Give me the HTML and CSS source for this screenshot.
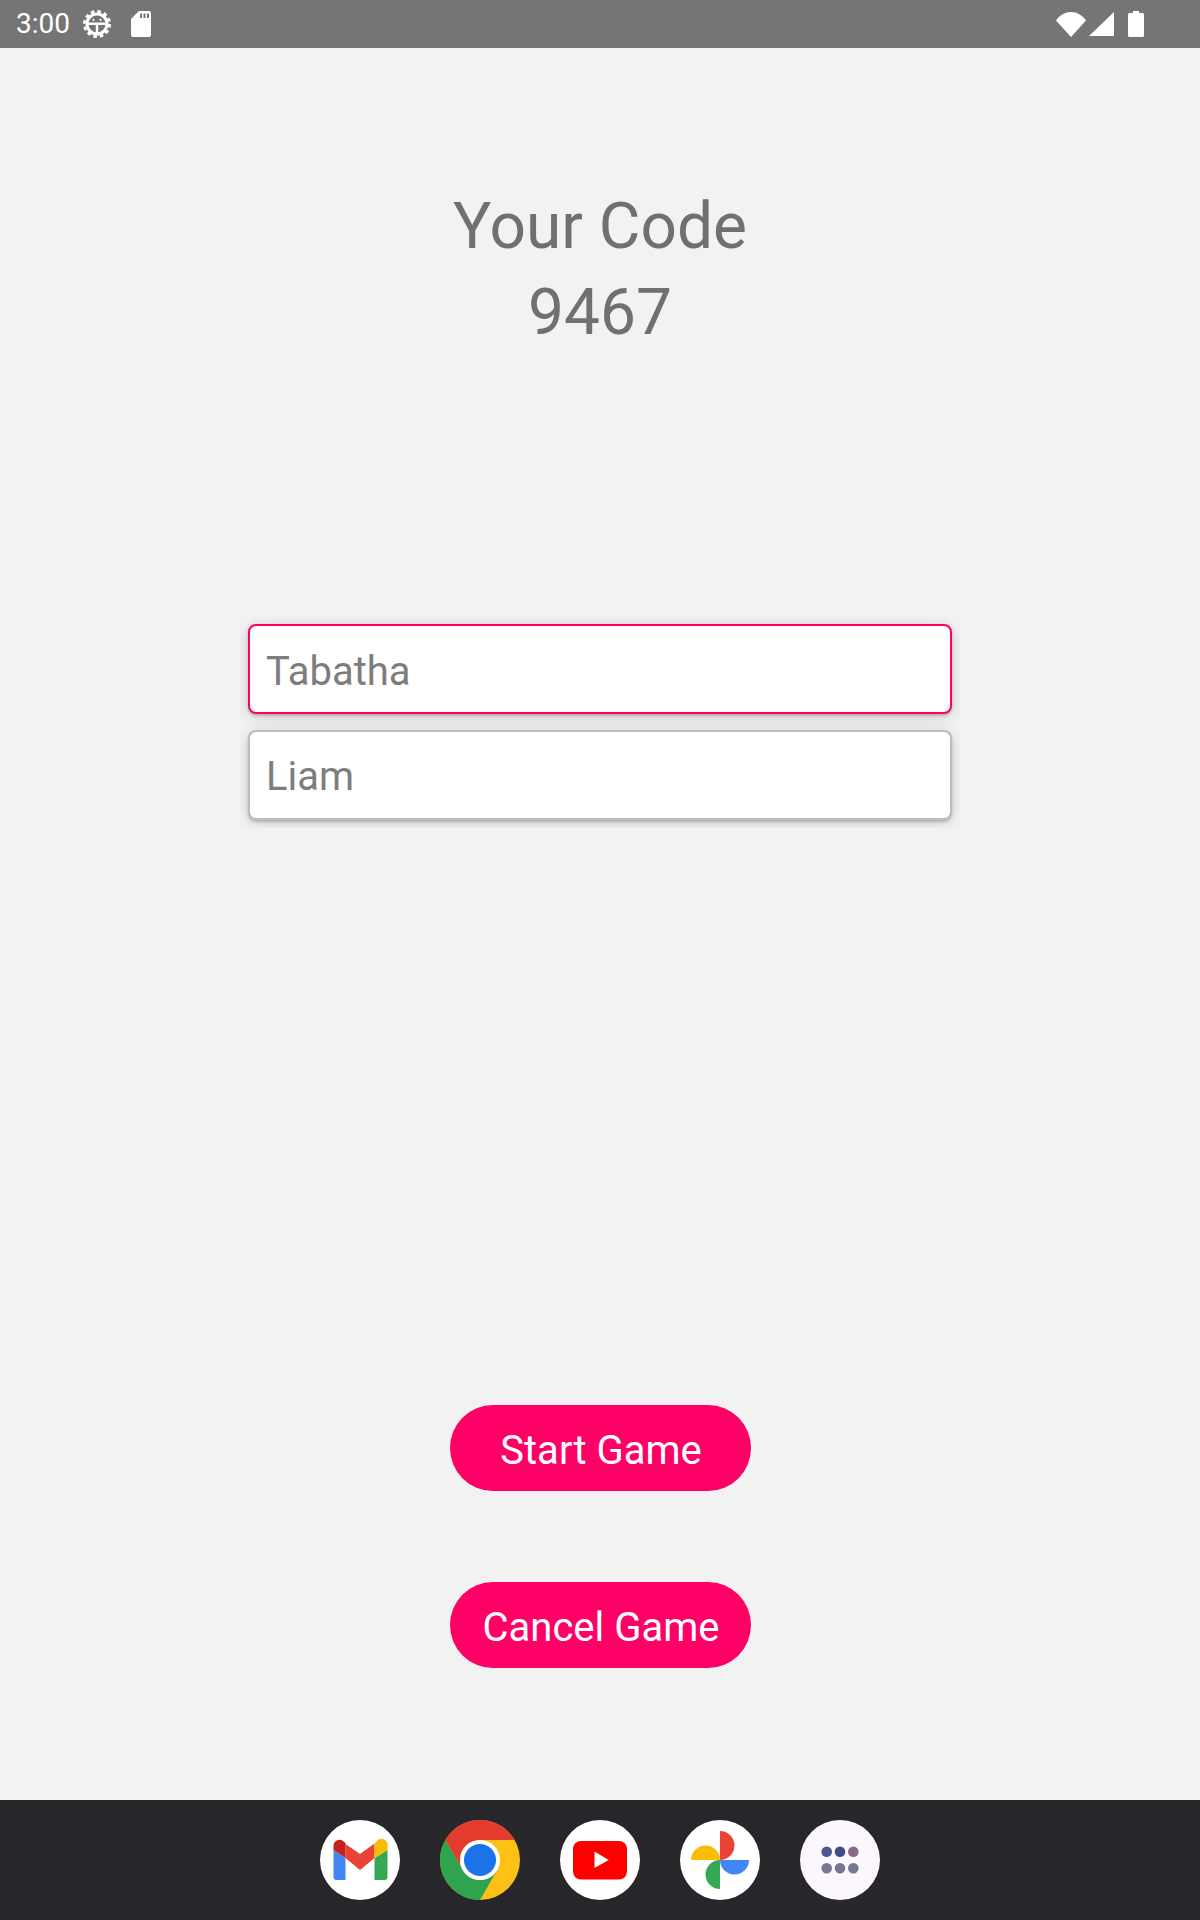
FILE: index.html
```html
<!DOCTYPE html>
<html lang="en">
<head>
<meta charset="utf-8">
<title>Your Code</title>
<link rel="stylesheet" href="styles.css">
</head>
<body>
<div class="screen">
  <header class="status">
    <div class="status-left">
      <span class="time">3:00</span>
      <svg class="ic-gear" width="28" height="28" viewBox="0 0 28 28">
        <circle cx="14" cy="14" r="12" fill="none" stroke="#fff" stroke-width="4" stroke-dasharray="3.4 2.88" opacity="1"/>
        <circle cx="14" cy="14" r="10" fill="none" stroke="#fff" stroke-width="3"/>
        <path d="M5 12.5H23V15H15.2V23H12.8V15H5Z" fill="#fff"/>
        <circle cx="10.5" cy="9.8" r="1.1" fill="#fff"/>
        <circle cx="17.5" cy="9.8" r="1.1" fill="#fff"/>
      </svg>
      <svg class="ic-sd" width="20" height="26" viewBox="0 0 20 26">
        <path fill-rule="evenodd" d="M8 0H18a2 2 0 0 1 2 2V24a2 2 0 0 1-2 2H2a2 2 0 0 1-2-2V8ZM9 2.5V7h2V2.5ZM12.5 2.5V7h2V2.5ZM16 2.5V7h2V2.5Z" fill="#fff"/>
      </svg>
    </div>
    <div class="status-right">
      <svg class="ic-wifi" width="30" height="25" viewBox="0 0 30 25"><path d="M0 8.5C4 3 9 0 15 0s11 3 15 8.5L15 25Z" fill="#fff"/></svg>
      <svg class="ic-signal" width="25" height="24" viewBox="0 0 25 24"><path d="M25 0V24H0Z" fill="#fff"/></svg>
      <svg class="ic-batt" width="16" height="26" viewBox="0 0 16 26"><path d="M5 0H11V2H14.5A1.5 1.5 0 0 1 16 3.500V24.500A1.500 1.500 0 0 1 14.500 26H1.500A1.500 1.500 0 0 1 0 24.500V3.500A1.500 1.500 0 0 1 1.500 2H5Z" fill="#fff"/></svg>
    </div>
  </header>

  <main class="content">
    <h1 class="code-title">Your Code<br>9467</h1>
    <section class="players">
      <div class="field field-active">Tabatha</div>
      <div class="field">Liam</div>
    </section>
    <div class="actions">
      <button class="pill" type="button">Start Game</button>
      <button class="pill" type="button">Cancel Game</button>
    </div>
  </main>

  <nav class="dock">
    <svg class="app" width="80" height="80" viewBox="0 0 80 80">
      <circle cx="40" cy="40" r="40" fill="#fff"/>
      <path d="M13.500 30V57a3 3 0 0 0 3 3H25.500V38Z" fill="#4285f4"/>
      <path d="M54.500 38V60H64.500a3 3 0 0 0 3-3V30Z" fill="#34a853"/>
      <path d="M25.500 24 40 34 54.500 23.500V38L40 50 25.500 38Z" fill="#ea4335"/>
      <path d="M13.500 26a6 6 0 0 1 9.500-5L25.500 23V38L13.500 30Z" fill="#c5221f"/>
      <path d="M54.500 23.500 57 21a6 6 0 0 1 10.500 5V30L54.500 38Z" fill="#fbbc04"/>
    </svg>
    <svg class="app" width="80" height="80" viewBox="0 0 80 80">
      <circle cx="40" cy="40" r="40" fill="#fdc015"/>
      <path d="M40 0A40 40 0 0 1 74.640 20H40A20 20 0 0 0 22.680 50L5.360 20A40 40 0 0 1 40 0Z" fill="#e33b2e"/>
      <path d="M5.360 20 22.680 50A20 20 0 0 0 57.320 50L40 80A40 40 0 0 1 5.360 20Z" fill="#2fa44f"/>
      <circle cx="40" cy="40" r="20" fill="#fff"/>
      <circle cx="40" cy="40" r="16" fill="#1a73e8"/>
    </svg>
    <svg class="app" width="80" height="80" viewBox="0 0 80 80">
      <circle cx="40" cy="40" r="40" fill="#fff"/>
      <rect x="13" y="21" width="54" height="38.500" rx="8" fill="#f00"/>
      <path d="M34.500 31.500 48.700 40 34.500 48Z" fill="#fff"/>
    </svg>
    <svg class="app" width="80" height="80" viewBox="0 0 80 80">
      <circle cx="40" cy="40" r="40" fill="#fff"/>
      <path d="M40 11A14.500 14.500 0 0 1 40 40Z" fill="#ea4335"/>
      <path d="M69 40A14.500 14.500 0 0 1 40 40Z" fill="#4285f4"/>
      <path d="M40 69A14.500 14.500 0 0 1 40 40Z" fill="#34a853"/>
      <path d="M11 40A14.500 14.500 0 0 1 40 40Z" fill="#fbbc04"/>
    </svg>
    <svg class="app" width="80" height="80" viewBox="0 0 80 80">
      <circle cx="40" cy="40" r="40" fill="#fbf7fc"/>
      <circle cx="26.700" cy="31.700" r="5.300" fill="#4f5592"/>
      <circle cx="40" cy="31.700" r="5.300" fill="#41498a"/>
      <circle cx="53.300" cy="31.700" r="5.300" fill="#8a6a8a"/>
      <circle cx="26.700" cy="48.300" r="5.300" fill="#757791"/>
      <circle cx="40" cy="48.300" r="5.300" fill="#757791"/>
      <circle cx="53.300" cy="48.300" r="5.300" fill="#757791"/>
    </svg>
  </nav>
</div>
</body>
</html>
```

FILE: styles.css
```css
* { box-sizing: border-box; }
html, body { margin: 0; padding: 0; }
body { font-family: Roboto, "Noto Sans", sans-serif; background: #f2f2f2; }
.screen { width: 1200px; height: 1920px; display: flex; flex-direction: column; overflow: hidden; }

.status { height: 48px; flex: none; background: #757575; display: flex; justify-content: space-between; align-items: center; padding: 0 56px 0 16px; color: #fff; }
.status-left, .status-right { display: flex; align-items: center; }
.time { font-size: 28px; line-height: 48px; width: 67px; }
.ic-sd { margin-left: 20px; }
.ic-signal { margin-left: 3px; }
.ic-batt { margin-left: 14px; }

.content { flex: 1; display: flex; flex-direction: column; align-items: center; }
.code-title { margin: 136px 0 0; font-size: 64px; line-height: 86px; font-weight: 400; color: #707070; text-align: center; }

.players { margin-top: 260px; width: 720px; padding: 8px 8px 8px; overflow: hidden; display: flex; flex-direction: column; gap: 16px; }
.field { height: 90px; padding-left: 16px; background: #fff; border: 2px solid #bdbdbd; border-radius: 8px; box-shadow: 0 2px 3px rgba(0,0,0,.2), 0 3px 16px rgba(0,0,0,.14); font-size: 40px; line-height: 90px; color: #7d7d7d; }
.field-active { border-color: #ff0066; line-height: 91px; }

.actions { margin-top: 577px; display: flex; flex-direction: column; align-items: center; gap: 91px; }
.pill { width: 301px; height: 86px; border: 0; border-radius: 43px; background: #ff0066; color: #fff; font-family: Roboto, sans-serif; font-size: 40px; padding: 5px 0 0 2px; }

.dock { margin-top: auto; height: 120px; flex: none; background: #26262b; display: flex; justify-content: center; align-items: center; gap: 40px; }
.app { display: block; }
```
